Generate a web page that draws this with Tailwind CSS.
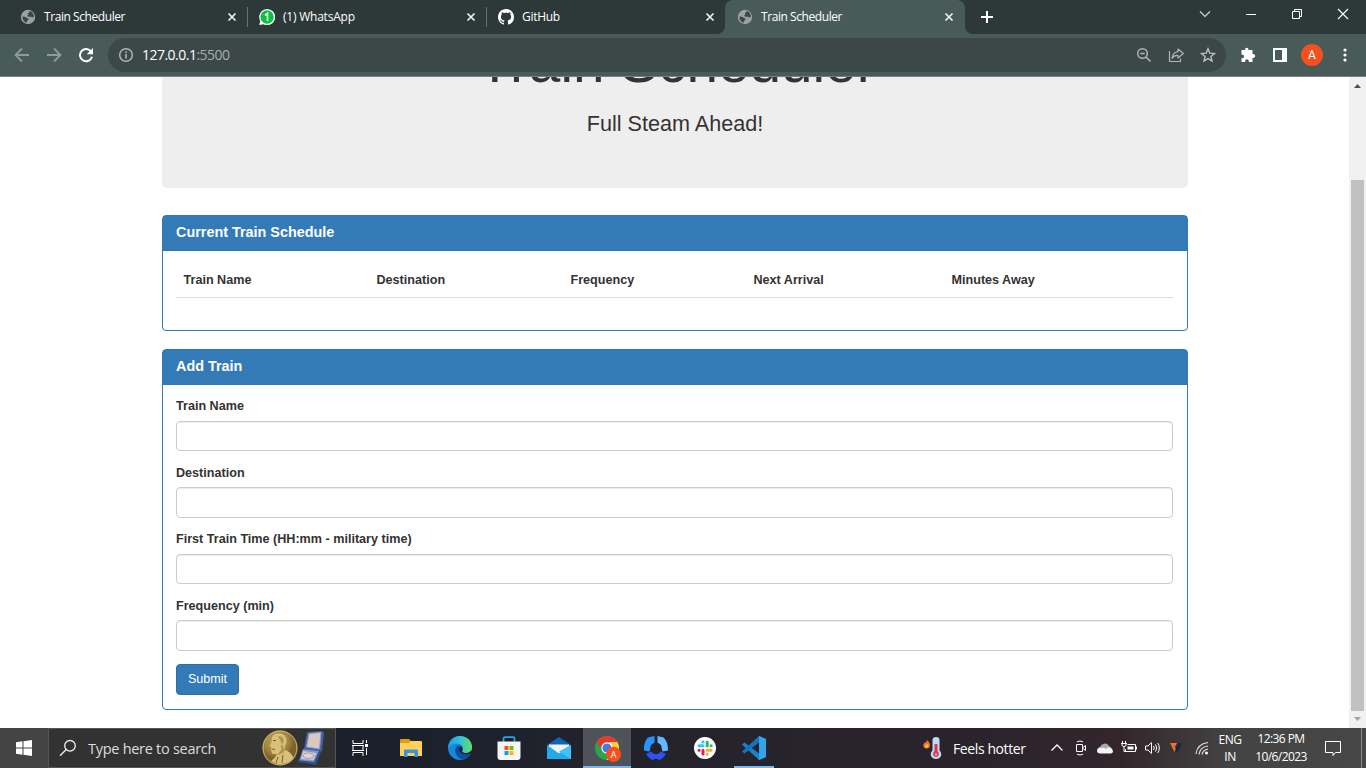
<!DOCTYPE html>
<html lang="en">
<head>
<meta charset="utf-8">
<title>Train Scheduler</title>
<script src="https://cdn.jsdelivr.net/npm/@tailwindcss/browser@4"></script>
</head>
<body class="w-[1366px] h-[768px] overflow-hidden flex flex-col bg-white font-['Open_Sans',sans-serif]">
<svg class="hidden">
  <symbol id="globe" viewBox="0 0 16 16"><circle cx="8" cy="8" r="7.200" fill="#9ba1a3"/><path d="M2.500 7.600 C4.500 7.200 6 8 7 9.300 L8.500 9.600 8.300 11 6.800 12 6.800 13.800 C4.200 13.300 2.300 10.800 2.500 7.600Z M9.300 1.900 C11.500 2.300 13.900 4.300 14 7.600 L12.600 8.600 11 7.800 8.300 7.700 7.200 6.500 8.500 5.300 7.700 4.200 9.300 3.400Z" fill="#3a4746"/></symbol>
  <symbol id="x" viewBox="0 0 10 10"><path d="M1.500 1.500 8.500 8.500M8.500 1.500 1.500 8.500" stroke="#eef1f1" stroke-width="1.7" fill="none"/></symbol>
</svg>

<!-- tab strip -->
<header class="h-[34px] shrink-0 bg-[#2c3938] flex pl-2 text-white text-[12px] tracking-[-0.3px]">
  <div class="w-[239px] flex items-center pl-3 pr-[10px] relative">
    <svg class="size-4"><use href="#globe"/></svg><span class="ml-2 flex-1 tracking-[-0.430px]">Train Scheduler</span><svg class="size-[10px]"><use href="#x"/></svg>
  </div>
  <div class="w-[239px] flex items-center pl-3 pr-[10px] relative">
    <span class="absolute left-0 top-[7px] w-px h-5 bg-[#667270]"></span>
    <svg class="size-4" viewBox="0 0 16 16"><path d="M.3 16 1.200 12A8 8 0 1 1 4.500 15.200Z" fill="#fff"/><circle cx="8.100" cy="8" r="6.700" fill="#0cc143"/><path d="M6 6.300 8.500 4.400V12" stroke="#fff" stroke-width="1.600" fill="none"/></svg><span class="ml-2 flex-1 tracking-[-0.220px]">(1) WhatsApp</span><svg class="size-[10px]"><use href="#x"/></svg>
  </div>
  <div class="w-[239px] flex items-center pl-3 pr-[10px] relative">
    <span class="absolute left-0 top-[7px] w-px h-5 bg-[#667270]"></span>
    <svg class="size-4" viewBox="0 0 16 16"><path fill="#fff" d="M8 0C3.580 0 0 3.580 0 8c0 3.540 2.290 6.530 5.470 7.590.4.070.55-.17.55-.38 0-.19-.01-.82-.01-1.490-2.010.37-2.530-.49-2.690-.94-.09-.23-.48-.94-.82-1.130-.28-.15-.68-.52-.01-.53.63-.01 1.080.58 1.230.82.72 1.210 1.870.87 2.330.66.070-.52.28-.87.51-1.070-1.780-.2-3.640-.89-3.640-3.950 0-.87.31-1.590.82-2.150-.08-.2-.36-1.020.08-2.120 0 0 .67-.21 2.200.82.64-.18 1.320-.27 2-.27s1.360.09 2 .27c1.530-1.040 2.200-.82 2.200-.82.44 1.100.16 1.920.08 2.120.51.560.82 1.270.82 2.150 0 3.070-1.870 3.750-3.650 3.950.29.25.54.73.54 1.480 0 1.070-.01 1.930-.01 2.200 0 .21.15.46.55.38A8.010 8.010 0 0 0 16 8c0-4.420-3.580-8-8-8Z"/></svg><span class="ml-2 flex-1">GitHub</span><svg class="size-[10px]"><use href="#x"/></svg>
  </div>
  <div class="w-[240px] flex items-center pl-3 pr-[11px] relative bg-[#485b59] rounded-t-lg">
    <svg class="absolute -left-2 bottom-0 size-2" viewBox="0 0 8 8"><path d="M8 0V8H0A8 8 0 0 0 8 0" fill="#485b59"/></svg>
    <svg class="absolute -right-2 bottom-0 size-2" viewBox="0 0 8 8"><path d="M0 0V8H8A8 8 0 0 1 0 0" fill="#485b59"/></svg>
    <svg class="size-4"><use href="#globe"/></svg><span class="ml-2 flex-1 tracking-[-0.430px]">Train Scheduler</span><svg class="size-[10px]"><use href="#x"/></svg>
  </div>
  <div class="flex-1 flex items-center pl-4">
    <svg class="size-3" viewBox="0 0 12 12"><path d="M6 0V12M0 6H12" stroke="#fff" stroke-width="2"/></svg>
  </div>
  <div class="flex items-start pt-[8px] gap-[34px] pr-[17px]">
    <svg class="size-3" viewBox="0 0 12 12"><path d="M1 3.500 6 8.500 11 3.500" stroke="#d5d8d8" stroke-width="1.100" fill="none"/></svg>
    <svg class="size-3" viewBox="0 0 12 12"><path d="M1 6.500H11" stroke="#fff" fill="none"/></svg>
    <svg class="size-3" viewBox="0 0 12 12"><path d="M1.500 3.500H8.500V10.500H1.500ZM3.500 3V1.500H10.500V8.500H9" stroke="#fff" fill="none"/></svg>
    <svg class="size-3" viewBox="0 0 12 12"><path d="M1 1 11 11M11 1 1 11" stroke="#fff" stroke-width="1.100" fill="none"/></svg>
  </div>
</header>

<!-- toolbar -->
<div class="h-[43px] shrink-0 bg-[#485b59] border-b border-[#73817f] flex items-center pl-[14px]">
  <svg class="size-4 mr-4" viewBox="0 0 16 16"><path d="M15 8H2M8 1.500 1.500 8 8 14.500" stroke="#8f9b99" stroke-width="1.800" fill="none"/></svg>
  <svg class="size-4 mr-4" viewBox="0 0 16 16"><path d="M1 8H14M8 1.500 14.500 8 8 14.500" stroke="#8f9b99" stroke-width="1.800" fill="none"/></svg>
  <svg class="size-4 mr-[14px]" viewBox="0 0 16 16"><path d="M13.200 4.800A6.100 6.100 0 1 0 14 9.700" stroke="#fff" stroke-width="2" fill="none"/><path d="M15 1V7.200H8.800Z" fill="#fff"/></svg>
  <div class="w-[1118px] h-[34px] rounded-full bg-[#3c4847] flex items-center pl-[10px] pr-[10px]">
    <svg class="size-4" viewBox="0 0 16 16"><circle cx="8" cy="8" r="6.300" stroke="#aeb5b4" stroke-width="1.500" fill="none"/><path d="M8 7V11.500M8 4.300V6" stroke="#aeb5b4" stroke-width="1.600"/></svg>
    <span class="ml-2 pb-[2px] flex-1 text-[14px] tracking-[-0.520px] text-white">127.0.0.1<span class="text-[#a4adab]">:5500</span></span>
    <svg class="size-4 mr-4" viewBox="0 0 16 16"><circle cx="6.500" cy="6.500" r="4.800" stroke="#aeb5b4" stroke-width="1.500" fill="none"/><path d="M10 10 14.500 14.500M4.300 6.500H8.700" stroke="#aeb5b4" stroke-width="1.600" fill="none"/></svg>
    <svg class="size-4 mr-4" viewBox="0 0 16 16"><path d="M1.500 4V14.500H12.500V11.500M10 2 15.300 6.500 10 11V8.500C7.500 8.300 5.500 9 4 11.300 4.500 7.300 6.500 5 10 4.600Z" stroke="#aeb5b4" stroke-width="1.200" fill="none" stroke-linejoin="round"/></svg>
    <svg class="size-4" viewBox="0 0 16 16"><path d="M8 1.800 9.800 6.100 14.500 6.500 10.900 9.500 12 14 8 11.600 4 14 5.100 9.500 1.500 6.500 6.200 6.100Z" stroke="#b9bfbe" stroke-width="1.400" fill="none"/></svg>
  </div>
  <svg class="size-4 ml-[14px]" viewBox="0 0 16 16"><path d="M1.500 3H5.200C4.800 1.500 5.600.7 6.700.7S8.700 1.500 8.300 3H12.500V7.100C14.200 6.900 15.200 7.900 15.200 9S14.200 11 12.500 10.900V15H8.900C9 13 8.100 12.200 7 12.200S5 13 5.100 15H1.500V11.300C3.400 11.300 4.100 10.500 4.100 9.400S3.400 7.500 1.500 7.500Z" fill="#fff"/></svg>
  <svg class="w-[14px] h-[14px] ml-[17px]" viewBox="0 0 14 14"><path fill-rule="evenodd" d="M0 0H14V14H0ZM2 2V12H9V2Z" fill="#fff"/></svg>
  <div class="ml-[14px] size-[22px] rounded-full bg-[#f4511e] text-white text-[12px] flex items-center justify-center font-[Roboto]">A</div>
  <svg class="w-1 h-4 ml-[20px]" viewBox="0 0 4 16"><g fill="#fff"><circle cx="2" cy="3" r="1.600"/><circle cx="2" cy="8" r="1.600"/><circle cx="2" cy="13" r="1.600"/></g></svg>
</div>

<!-- page -->
<div class="flex-1 min-h-0 flex overflow-hidden">
  <main class="flex-1 pl-[162px] font-['Liberation_Sans',Arial,sans-serif] text-[#333] text-[12.600px]">
    <div class="w-[1026px]">
      <div class="h-[111px] bg-[#eee] rounded-b-[5px] text-center overflow-hidden">
        <h1 class="text-[56.700px] leading-[62px] -mt-[45px] pl-[3px]">Train Scheduler</h1>
        <h3 class="text-[21.600px] leading-6 mt-[18px]">Full Steam Ahead!</h3>
      </div>
      <section class="mt-[27px] h-[116px] border border-[#337ab7] rounded">
        <h3 class="h-[35px] bg-[#337ab7] pl-[13px] text-white font-bold text-[14.400px] leading-[33px]">Current Train Schedule</h3>
        <div class="ml-[13px] mr-[14px] mt-[13px] h-[34px] border-b border-[#ddd] flex font-bold pl-[7.500px] pt-[7px] leading-[18px]">
          <span class="w-[193px]">Train Name</span><span class="w-[194px]">Destination</span><span class="w-[183px]">Frequency</span><span class="w-[198px]">Next Arrival</span><span>Minutes Away</span>
        </div>
      </section>
      <section class="mt-[18px] h-[361px] border border-[#337ab7] rounded">
        <h3 class="h-[35px] bg-[#337ab7] pl-[13px] text-white font-bold text-[14.400px] leading-[33px]">Add Train</h3>
        <form class="pl-[13px] pr-[14px] pt-[12px]">
          <label class="block font-bold leading-[18px] h-6">Train Name</label>
          <input class="block w-full h-[30px] border border-[#ccc] rounded-[4px] shadow-[inset_0_1px_1px_rgba(0,0,0,0.075)]">
          <label class="block font-bold leading-[18px] h-[23px] mt-[13px]">Destination</label>
          <input class="block w-full h-[31px] border border-[#ccc] rounded-[4px] shadow-[inset_0_1px_1px_rgba(0,0,0,0.075)]">
          <label class="block font-bold leading-[18px] h-6 mt-[12px]">First Train Time (HH:mm - military time)</label>
          <input class="block w-full h-[30px] border border-[#ccc] rounded-[4px] shadow-[inset_0_1px_1px_rgba(0,0,0,0.075)]">
          <label class="block font-bold leading-[18px] h-[23px] mt-[13px]">Frequency (min)</label>
          <input class="block w-full h-[31px] border border-[#ccc] rounded-[4px] shadow-[inset_0_1px_1px_rgba(0,0,0,0.075)]">
          <button type="button" class="block mt-[13px] w-[63px] h-[31px] bg-[#337ab7] border border-[#2e6da4] rounded-[4px] text-white">Submit</button>
        </form>
      </section>
    </div>
  </main>
  <div class="w-[17px] bg-[#f1f1f1] flex flex-col items-center">
    <svg class="w-[17px] h-[17px]" viewBox="0 0 17 17"><path d="M5 11H12L8.500 7Z" fill="#505050"/></svg>
    <div class="mt-[86px] w-[13px] h-[531px] bg-[#c1c1c1]"></div>
    <svg class="w-[17px] h-[17px]" viewBox="0 0 17 17"><path d="M5 6H12L8.500 10Z" fill="#a3a3a3"/></svg>
  </div>
</div>

<!-- taskbar -->
<footer class="h-10 shrink-0 flex items-center text-white bg-[linear-gradient(90deg,#444_0px,#444_48px,#1c202a_336px,#1d212b_480px,#26232c_720px,#2a232b_960px,#32262b_1120px,#3b3335_1170px,#434343_1230px,#474747_1366px)]">
  <div class="w-12 flex justify-center"><svg class="size-4" viewBox="0 0 16 16"><path d="M0 2.200 6.500 1.300V7.500H0ZM7.500 1.200 16 0V7.500H7.500ZM0 8.500H6.500V14.700L0 13.800ZM7.500 8.500H16V16L7.500 14.800Z" fill="#fff"/></svg></div>
  <div class="w-[288px] h-10 bg-[#323232] border border-[#555] flex items-center pl-[10px]">
    <svg class="w-[18px] h-[18px]" viewBox="0 0 18 18"><circle cx="11" cy="6.800" r="5.300" stroke="#eee" stroke-width="1.300" fill="none"/><path d="M7.200 10.600 1 16.800" stroke="#eee" stroke-width="1.400"/></svg>
    <span class="ml-[11px] pt-[2px] text-[14.500px] tracking-[-0.280px] text-[#ddd] w-[173px]">Type here to search</span>
    <svg class="w-[64px] h-[38px] shrink-0" viewBox="0 0 64 38">
      <defs><radialGradient id="gold" cx=".4" cy=".3"><stop offset="0" stop-color="#c4a759"/><stop offset=".7" stop-color="#a08340"/><stop offset="1" stop-color="#7c6229"/></radialGradient></defs>
      <circle cx="19" cy="19" r="17.700" fill="url(#gold)"/><circle cx="19" cy="19" r="16.900" fill="none" stroke="#d2bd77" stroke-width=".9"/>
      <path d="M11 8C13 4 20 3.500 23.500 6.500 26.500 9.500 26 14 24 17L24 21C28 22 31 25 32.500 29 27 36 16 37 10 32L14 28.500 16 25 11.500 25 10 21 10.500 19 8.800 17 10.500 13.500Z" fill="#d8c078"/>
      <path d="M17 7C22 7 24 10 22 14L19.500 18 21 20 16 26 22 24 24 21" fill="#9a7c39" opacity=".65"/><path d="M12 11.500 15 11.500M11 20 14 20.500M17 28 15 34M22 26 21 34" stroke="#7b602a" fill="none"/>
      <path d="M46 3 61 2 63 4 61 22 59 23 43 20Z" fill="#44619f"/><path d="M48 4.500 60 3.500 58.500 20 45.500 18Z" fill="#d9c8c2" stroke="#8c9cc9"/>
      <path d="M42 20 58 22 54 35 38 32Z" fill="#8195c8"/><path d="M42 22 55.500 24 52.500 31 40 30Z" fill="#d5c9c8"/><path d="M37 31 53 33 58 22 60 23 55 36 37 33Z" fill="#304d8d"/><ellipse cx="47.500" cy="26.700" rx="5.200" ry="2.700" fill="#ddd5d1" stroke="#9b8f95" stroke-width=".8"/>
    </svg>
  </div>
  <!-- pinned apps -->
  <div class="w-12 flex justify-center"><svg class="w-[17px] h-4" viewBox="0 0 17 16"><path d="M1 0V3.500H11V0M1 16V12.500H11V16M1 5.500H11V10.500H1Z" stroke="#fff" fill="none"/><path d="M0 5.500H12M0 10.500H12M14.500 0V3M14.500 8V15" stroke="#fff"/><path d="M13 4H16V7H13Z" fill="#fff"/></svg></div>
  <div class="w-[53px] flex justify-center"><svg class="w-[22px] h-[20px]" viewBox="0 0 22 20"><path d="M0 2Q0 1 1 1H9L11 3V6H0Z" fill="#e19a0c"/><path d="M0 5H9L11 3H21Q22 3 22 4V18H0Z" fill="#ffd15b"/><path d="M4 12.500Q4 11.500 5 11.500H17Q18 11.500 18 12.500V19H14.500V15H7.500V19H4Z" fill="#3895dc"/></svg></div>
  <div class="w-[46px] flex justify-center"><svg class="size-6" viewBox="0 0 24 24"><defs><linearGradient id="eg" x1="0" y1=".4" x2="1" y2=".4"><stop offset="0" stop-color="#229ee6"/><stop offset=".55" stop-color="#35c4d4"/><stop offset="1" stop-color="#68df58"/></linearGradient></defs><circle cx="12" cy="12" r="12" fill="#1688d9"/><path d="M.6 9C2 3 7 0 12 0 19 0 24 5 24 11 24 15 21 17 17.500 17 15 17 13.500 16 14.300 14.500 16 11 13 7.500 9 7.500 5 7.500 2 9.500 0 12Z" fill="url(#eg)"/><path d="M8 11C5.500 16 9 22 15 23.600 19 22.500 21 20 22 18 17 20.500 11 18 11 13.500 11 12 12 10.500 13 10 11 9 9 9.500 8 11Z" fill="#104d9b"/><path d="M14.300 14.500C13.500 16 15 17 17.500 17 20 17 22 16 23.300 14.400L24.500 16 22 18C16 20 11 17 11 13.500 11 12 12 10.700 13.200 10 14.500 11 15 13 14.300 14.500Z" fill="#1d212b"/></svg></div>
  <div class="w-[51px] flex justify-center"><svg class="w-6 h-6" viewBox="0 0 24 24"><path d="M6.500 6V2.500Q6.500 1.200 8 1.200H16Q17.500 1.200 17.500 2.500V6" fill="none" stroke="#28a9e5" stroke-width="1.700"/><path d="M.5 5.500H23.500V21Q23.500 24 20.500 24H3.500Q.5 24 .5 21Z" fill="#f5f5f5"/><path d="M7.500 10H11.500V14H7.500Z" fill="#f25022"/><path d="M12.500 10H16.500V14H12.500Z" fill="#7fba00"/><path d="M7.500 15H11.500V19H7.500Z" fill="#00a4ef"/><path d="M12.500 15H16.500V19H12.500Z" fill="#ffb900"/></svg></div>
  <div class="w-[49px] flex justify-center"><svg class="w-6 h-[23px]" viewBox="0 0 24 23"><path d="M0 8 12 0 24 8V15H0Z" fill="#0b66b6"/><path d="M2 7.500H22V11L12 17 2 11Z" fill="#f2f2f2"/><path d="M0 8 12 16.500 24 8V22H0Z" fill="#24a8ec"/><path d="M24 8V22L12 14.500Z" fill="#40c2f5"/></svg></div>
  <div class="w-12 h-10 flex justify-center items-center pl-[2px] pt-[3px] bg-[#50525a] border-b-2 border-[#76b9ed]"><svg class="w-[26px] h-[26px]" viewBox="0 0 26 26"><circle cx="12" cy="12" r="12" fill="#2ba24c"/><path d="M1.600 6A12 12 0 0 1 22.400 6L12 7 7.400 14.500Z" fill="#e33b2e"/><path d="M22.400 6A12 12 0 0 1 11.500 24L17 14.500 14 6Z" fill="#fccd34"/><circle cx="12" cy="12" r="5.700" fill="#fff"/><circle cx="12" cy="12" r="4.500" fill="#3c7be8"/><circle cx="18.500" cy="18.300" r="7.600" fill="#f4511e"/><text x="18.500" y="21.500" text-anchor="middle" font-size="9" fill="#fff">A</text></svg></div>
  <div class="w-[50px] flex justify-center"><svg class="w-6 h-6" viewBox="0 0 24 24"><path d="M4 1.500 10.500 0V6.500L7 9 5.500 15.500 0 14.500C0 8 1 5 4 1.500Z" fill="#2594fb"/><path d="M13.500 0 19.500 1.500C23 5 24 9 24 14.500L18.500 15.500 17 9 13.500 6.500Z" fill="#64b8ff"/><path d="M2 18 7 15.500 10 18H14L17 15.500 22 18C20 21 18 23 15.500 24L12 22.500 8.500 24C6 23 4 21 2 18Z" fill="#3150f4"/></svg></div>
  <div class="w-12 flex justify-center"><svg class="w-[22px] h-[22px]" viewBox="0 0 22 22"><circle cx="11" cy="11" r="11" fill="#fff"/><g stroke-width="3" stroke-linecap="round"><path d="M5 8.700H9M9 4.700V5" stroke="#36c5f0"/><path d="M13.200 5V9M17 8.700H17.200" stroke="#2eb67d"/><path d="M13.200 13.300H17M13.200 17V17.200" stroke="#ecb22e"/><path d="M9 13.300V17M5 13.300H5.200" stroke="#e01e5a"/></g></svg></div>
  <div class="w-[49px] h-10 flex items-center justify-center relative"><svg class="w-6 h-6 ml-px" viewBox="0 0 24 24"><path d="M17 0 24 3V21L17 24 0 8.500 2.500 6.500 17 17.500Z" fill="#1784ca"/><path d="M17 0V6.500L2.500 17.500 0 15.500Z" fill="#1476ba"/><path d="M17 0 24 3V21L17 24Z" fill="#30a5eb"/></svg><span class="absolute bottom-0 left-[5px] w-10 h-[2px] bg-[#76b9ed]"></span></div>
  <!-- tray -->
  <div class="flex-1 flex items-center pl-[145px]">
    <svg class="w-[20px] h-6 shrink-0" viewBox="0 0 20 24"><path d="M4 4C6 6 8 8 6.500 11 5 13.500 1 13 .3 10 0 8 1.500 7 2 6L3 7Z" fill="#f17429"/><circle cx="3.800" cy="10" r="1.700" fill="#ffbc52"/><path d="M9.500 4Q9.500 1 13 1T16.500 4V14.500Q19 17 18 20 16.500 23 13 23T8 20Q7 17 9.500 14.500Z" fill="#bddcf3"/><path d="M11.500 8H14.500V15Q16.500 17 15.800 19 15 21 13 21T10 19Q9.500 17 11.500 15Z" fill="#da354d"/><circle cx="13" cy="18.500" r="1.400" fill="#f48692"/></svg>
    <span class="ml-[10px] w-[98px] shrink-0 text-[14px] tracking-[-0.400px]">Feels hotter</span>
    <svg class="w-3 h-3 shrink-0" viewBox="0 0 12 12"><path d="M.5 8.500 6 3 11.500 8.500" stroke="#fff" stroke-width="1.300" fill="none"/></svg>
    <svg class="w-3 h-4 ml-3 shrink-0" viewBox="0 0 12 16"><path d="M1.500 4.500H7.500V11.500H1.500ZM8 7.500 10.500 5.500V10.500L8 8.500M2 1.800Q5 .2 8 1.800M2 14.200Q5 15.800 8 14.200" stroke="#fff" fill="none"/></svg>
    <svg class="w-4 h-3 ml-[10px] shrink-0" viewBox="0 0 16 12"><path d="M4 11A3 3 0 0 1 3 5 5 5 0 0 1 12 4 4 4 0 0 1 13 11Z" fill="#aaa"/><path d="M1 11A3 3 0 0 1 4 6Q7 5 9 7 11 4 14 6 18 10 14 11.500H3Z" fill="#f4f4f4"/></svg>
    <svg class="w-4 h-4 ml-2 shrink-0" viewBox="0 0 16 16"><path d="M6.500 4.500H14.500V11.500H4.500V9M15.500 6.500V9.500M1.500 1V3M4.500 1V3M0 3.500H6M1 4V5.500Q3 8 5 5.500V4M3 7V11.500H5" stroke="#fff" fill="none"/><path d="M6.500 6.500H12.500V9.500H6.500Z" fill="#fff"/></svg>
    <svg class="w-4 h-4 ml-[8px] shrink-0" viewBox="0 0 16 16"><path d="M.5 6H3L6.500 2.500V13.500L3 10H.5ZM8.500 6Q10 8 8.500 10M10.500 4.500Q13 8 10.500 11.500M12.700 3Q16 8 12.700 13" stroke="#fff" fill="none"/></svg>
    <svg class="w-3 h-[10px] ml-[9px] shrink-0" viewBox="0 0 12 10"><path d="M0 0H7L5.500 3H4.500L6 6 4.500 9Z" fill="#ee712c"/><path d="M8 0H12L7 10 5 8Z" fill="#172541"/></svg>
    <svg class="w-[14px] h-[14px] ml-[13px] shrink-0" viewBox="0 0 14 14"><path d="M1 13Q2 3 13 1.500M4 13.500Q5 6 13 5M7 13.500Q8 9 13 8" stroke="#ddd" stroke-width="1.200" fill="none"/><circle cx="11.500" cy="12" r="1.500" fill="#fff"/></svg>
    <div class="ml-[8px] w-[26px] shrink-0 text-center text-[12px] leading-[17px] tracking-[-0.500px]">ENG<br>IN</div>
    <div class="ml-[9px] w-[58px] shrink-0 text-center whitespace-nowrap text-[12px] leading-[18px] tracking-[-0.600px]">12:36 PM<br>10/6/2023</div>
    <svg class="w-4 h-[17px] ml-[15px] shrink-0" viewBox="0 0 16 17"><path d="M.5 1.500H15.500V12.500H10.500L8 15.500V12.500H.5Z" stroke="#fff" fill="none"/></svg>
  </div>
  <div class="w-[5px] h-10 border-l border-[#888]"></div>
</footer>
</body>
</html>
